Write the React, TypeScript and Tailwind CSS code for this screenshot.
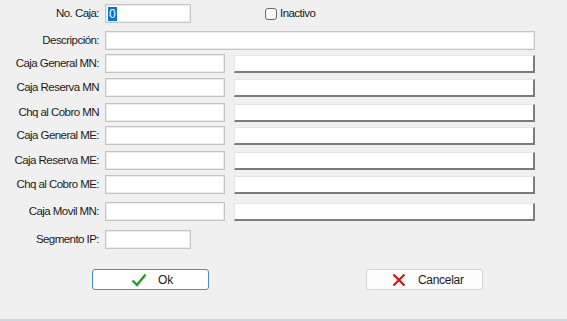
import { FC } from "react";

type Row = { label: string; mt: string };

const rows: Row[] = [
  { label: "Caja General MN:", mt: "mt-[4px]" },
  { label: "Caja Reserva MN", mt: "mt-[5px]" },
  { label: "Chq al Cobro MN", mt: "mt-[6px]" },
  { label: "Caja General ME:", mt: "mt-[4px]" },
  { label: "Caja Reserva ME:", mt: "mt-[6px]" },
  { label: "Chq al Cobro ME:", mt: "mt-[5px]" },
  { label: "Caja Movil MN:", mt: "mt-[8px]" },
];

const Label: FC<{ text: string }> = ({ text }) => (
  <div className="w-[100px] shrink-0 text-right pr-[1px] text-[11.5px] tracking-[-0.55px] text-[#1b1b1b]">
    {text}
  </div>
);

const Input: FC<{ w: string; children?: React.ReactNode }> = ({ w, children }) => (
  <div className={`${w} h-[19px] ml-[5px] bg-white border border-[#c4c4c4] shadow-[inset_0_0_0_1px_#ececec] flex items-center px-[2px]`}>
    {children}
  </div>
);

const Lookup: FC = () => (
  <div className="ml-[9px] mt-[1px] w-[301px] h-[18px] bg-white border-t border-l border-[#e6e6e6] border-b-2 border-r-2 border-b-[#7c7c7c] border-r-[#7c7c7c]" />
);

const App: FC = () => {
  return (
    <div
      className="w-[567px] h-[321px] bg-[#f0f0f0] flex flex-col border-b-2 border-[#c8d8e5]"
      style={{ fontFamily: '"Liberation Sans", Arial, sans-serif' }}
    >
      <div className="flex items-center mt-[4px]">
        <Label text="No. Caja:" />
        <Input w="w-[86px]">
          <span className="bg-[#0078d7] text-white text-[12px] leading-[14px] px-[1px]">0</span>
        </Input>
        <div className="flex items-center ml-[74px] gap-[3px]">
          <div className="w-[12px] h-[12px] rounded-[3px] border border-[#6a6a6a] bg-[#f8f8f8]" />
          <span className="text-[11.5px] tracking-[-0.55px] text-[#1b1b1b]">Inactivo</span>
        </div>
      </div>

      <div className="flex items-center mt-[8px]">
        <Label text="Descripción:" />
        <Input w="w-[430px]" />
      </div>

      {rows.map((r) => (
        <div key={r.label} className={`flex items-start ${r.mt}`}>
          <div className="h-[19px] flex items-center">
            <Label text={r.label} />
          </div>
          <Input w="w-[120px]" />
          <Lookup />
        </div>
      ))}

      <div className="flex items-center mt-[9px]">
        <Label text="Segmento IP:" />
        <Input w="w-[86px]" />
      </div>

      <div className="flex mt-[20px]">
        <button className="ml-[92px] w-[117px] h-[21px] bg-white border border-[#3d8ee0] rounded-[3px] flex items-center text-[12px] text-[#1b1b1b]">
          <svg width="16" height="14" viewBox="0 0 16 14" className="ml-[38px]">
            <path d="M1.5 7.5 L6 12 L14.5 1.5" fill="none" stroke="#1aa31a" strokeWidth="2.4" strokeLinejoin="miter" />
          </svg>
          <span className="ml-[11px]">Ok</span>
        </button>
        <button className="ml-[157px] w-[117px] h-[21px] bg-[#fdfdfd] border border-[#d4d4d4] rounded-[3px] flex items-center text-[12px] text-[#1b1b1b]">
          <svg width="14" height="14" viewBox="0 0 14 14" className="ml-[25px]">
            <path d="M1.5 1.5 L12.5 12.5 M12.5 1.5 L1.5 12.5" fill="none" stroke="#e01010" strokeWidth="2.2" />
          </svg>
          <span className="ml-[12px] tracking-[-0.3px]">Cancelar</span>
        </button>
      </div>
      <div className="flex-1" />
    </div>
  );
};

export default App;
